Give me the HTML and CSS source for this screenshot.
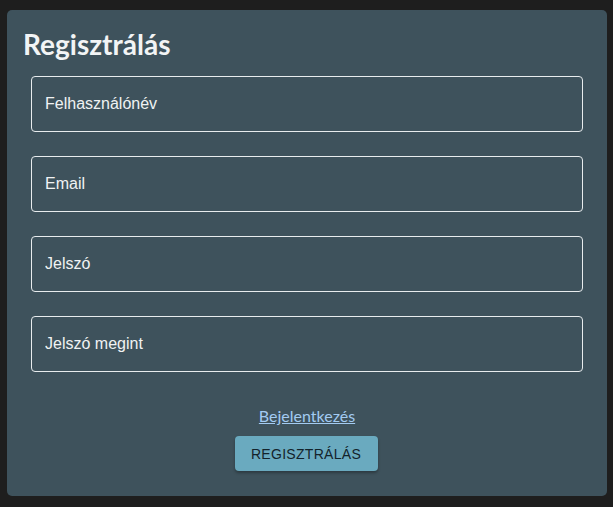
FILE: index.html
```html
<!DOCTYPE html>
<html lang="hu">
<head>
<meta charset="utf-8">
<link rel="stylesheet" href="styles.css">
</head>
<body>
<div class="card">
  <h1 class="title">Regisztrálás</h1>
  <form class="form">
    <div class="field"><input class="input" type="text" placeholder="Felhasználónév"></div>
    <div class="field"><input class="input" type="email" placeholder="Email"></div>
    <div class="field"><input class="input" type="password" placeholder="Jelszó"></div>
    <div class="field"><input class="input" type="password" placeholder="Jelszó megint"></div>
    <div class="actions">
      <a class="link" href="#">Bejelentkezés</a>
      <button class="btn" type="button">Regisztrálás</button>
    </div>
  </form>
</div>
</body>
</html>
```
FILE: styles.css
```css
html, body {
  margin: 0;
  padding: 0;
  background: #1e1e1e;
  height: 100%;
}
body {
  padding: 10px 6px 11px 7px;
  box-sizing: border-box;
}
.card {
  background: #3e525c;
  border-radius: 5px;
  padding: 18px 24px 24px 24px;
  box-sizing: border-box;
  height: 486px;
}
.title {
  margin: 0 0 16px -8px;
  font-family: "Lato", "Open Sans", sans-serif;
  font-weight: 700;
  font-size: 28px;
  line-height: 32px;
  color: #f2f4f5;
}
.form {
  display: flex;
  flex-direction: column;
  gap: 24px;
}
.field {
  display: flex;
}
.input {
  flex: 1;
  height: 56px;
  box-sizing: border-box;
  border: 1px solid #e8ecee;
  border-radius: 4px;
  background: transparent;
  padding: 0 13px;
  font-family: "Liberation Sans", Arial, sans-serif;
  font-size: 16px;
  color: #fff;
  outline: none;
}
.input::placeholder {
  color: #f0f2f3;
  opacity: 1;
}
.actions {
  display: flex;
  flex-direction: column;
  align-items: center;
  margin-top: 10px;
  gap: 10px;
}
.link {
  font-family: "Lato", "Open Sans", sans-serif;
  font-size: 16px;
  line-height: 20px;
  color: #a3cbf2;
  text-decoration: underline;
}
.btn {
  width: 143px;
  height: 35px;
  margin-right: 2px;
  border: none;
  border-radius: 4px;
  background: #6aaabf;
  color: #13232b;
  font-family: "Liberation Sans", Arial, sans-serif;
  font-size: 14px;
  letter-spacing: 0.3px;
  text-transform: uppercase;
  box-shadow: 0 2px 3px rgba(0,0,0,0.3);
}
```
